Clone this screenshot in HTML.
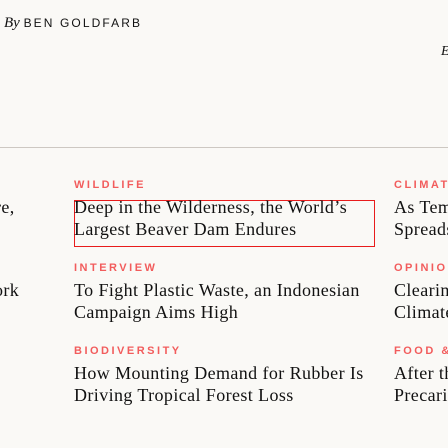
<!DOCTYPE html>
<html><head><style>
body{margin:0;width:448px;height:448px;background:#faf9f6;overflow:hidden;position:relative;font-family:"Liberation Serif",serif;color:#111}
.a{position:absolute;white-space:nowrap}
.l{font-family:"Liberation Sans",sans-serif;font-weight:bold;font-size:11px;letter-spacing:2.5px;color:#f25c5c}
.t{font-size:18px;line-height:22px;letter-spacing:0.4px}
</style></head><body>
<div class="a" style="left:4px;top:15px;font-size:15px"><i>By</i> <span style="font-family:'Liberation Sans',sans-serif;font-size:12px;letter-spacing:2.1px">BEN GOLDFARB</span></div>
<div class="a" style="left:441px;top:44px;font-size:14px"><i>E</i></div>
<div style="position:absolute;left:0;top:147px;width:448px;height:1px;background:#cdc8c2"></div>

<div class="a l" style="left:74px;top:179px">WILDLIFE</div>
<div style="position:absolute;left:74px;top:200px;width:299px;height:45px;border:1px solid #e81c1c"></div>
<div class="a t" style="left:74px;top:196px">Deep in the Wilderness, the World’s<br>Largest Beaver Dam Endures</div>
<div class="a l" style="left:74px;top:262px">INTERVIEW</div>
<div class="a t" style="left:74px;top:279px">To Fight Plastic Waste, an Indonesian<br>Campaign Aims High</div>
<div class="a l" style="left:74px;top:345px">BIODIVERSITY</div>
<div class="a t" style="left:74px;top:362px">How Mounting Demand for Rubber Is<br>Driving Tropical Forest Loss</div>

<div class="a t" style="left:-5px;top:196px">re,</div>
<div class="a t" style="left:-6px;top:279px">ork</div>

<div class="a l" style="left:394px;top:179px">CLIMATE</div>
<div class="a t" style="left:394px;top:196px">As Tem<br>Spreads</div>
<div class="a l" style="left:394px;top:262px">OPINION</div>
<div class="a t" style="left:394px;top:279px">Clearing<br>Climate</div>
<div class="a l" style="left:394px;top:345px">FOOD &amp; A</div>
<div class="a t" style="left:394px;top:362px">After th<br>Precario</div>
</body></html>
